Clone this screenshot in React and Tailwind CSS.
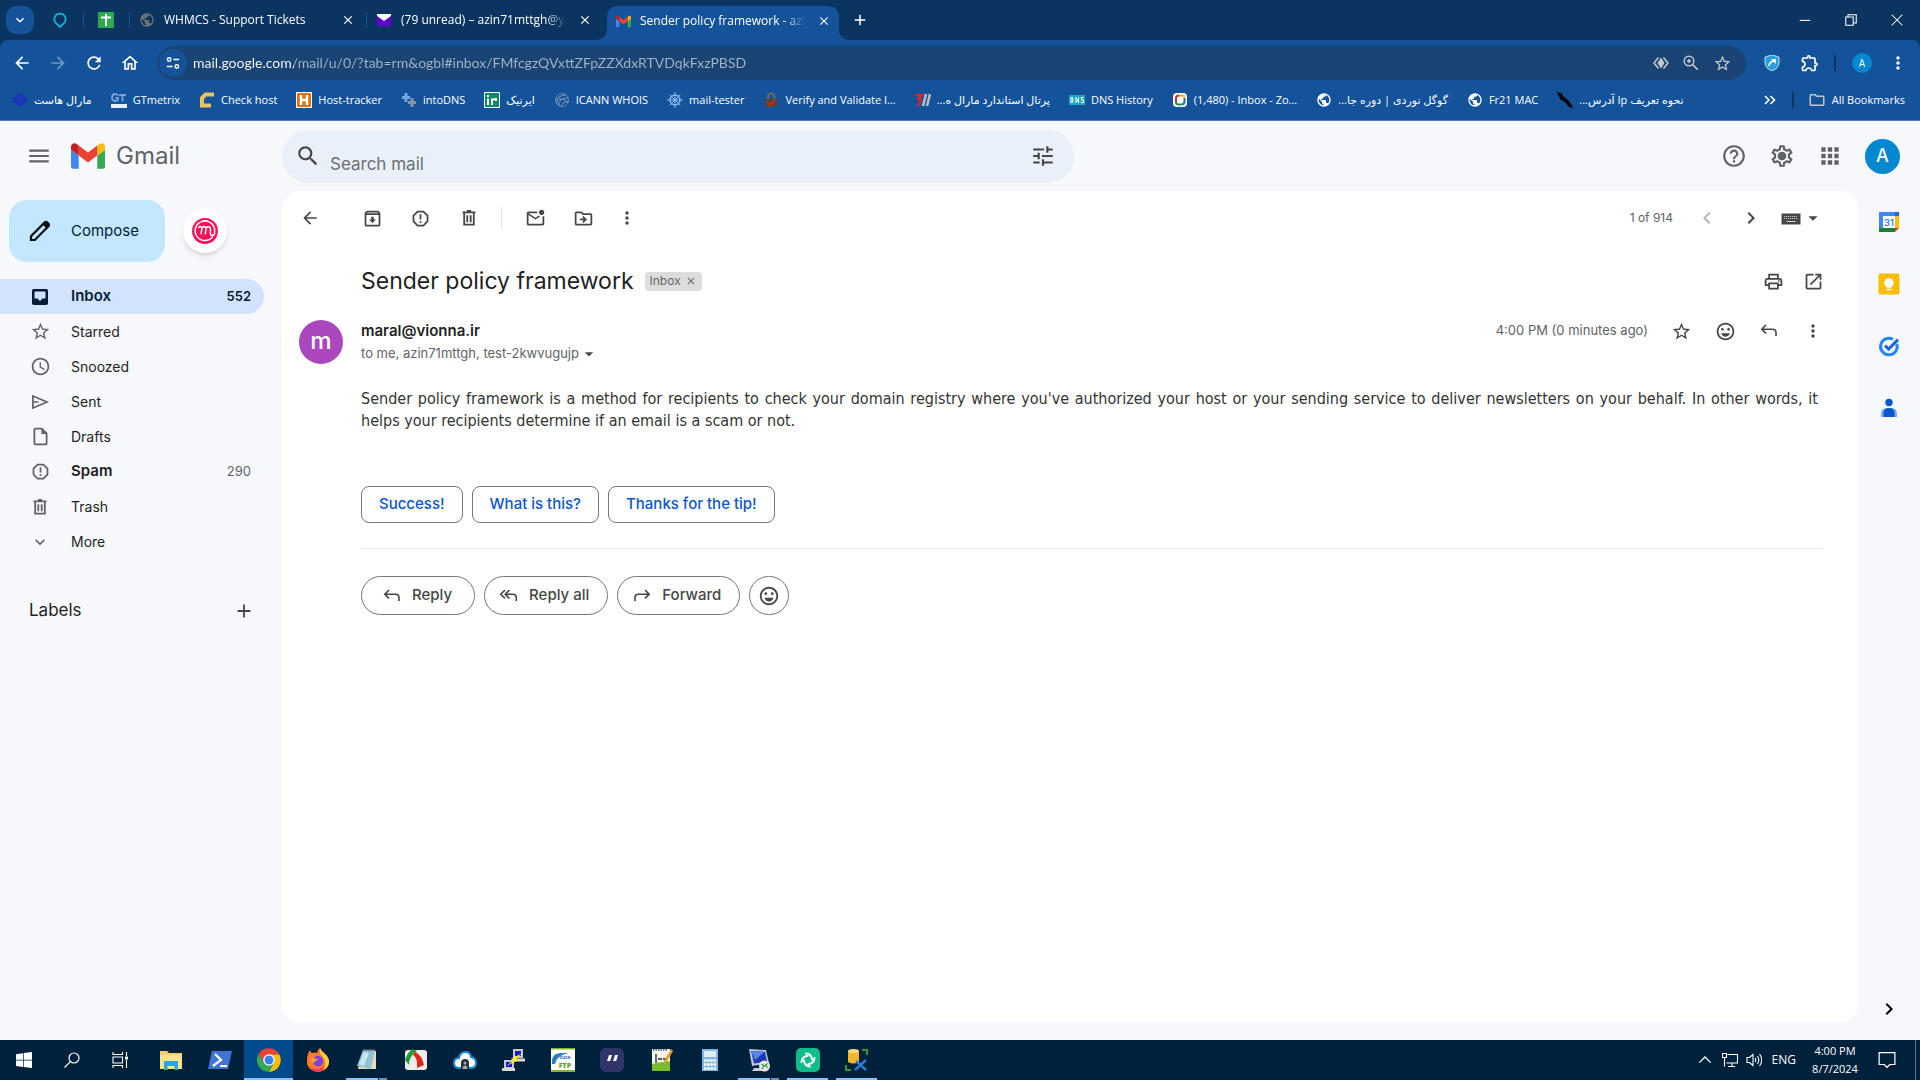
import {
    MdAccessTime, MdApps, MdArrowBack, MdArrowDropDown, MdArrowForward, MdAdd, MdChevronLeft, MdChevronRight,
    MdClose, MdExpandMore, MdHelpOutline, MdMenu, MdMoreVert, MdOpenInNew, MdOutlineArchive,
    MdOutlineDriveFileMove, MdOutlineEmojiEmotions, MdOutlineExtension, MdOutlineFolder, MdOutlineHome,
    MdOutlineInsertDriveFile, MdOutlineMarkEmailUnread, MdOutlinePrint, MdOutlineSettings, MdPublic, MdRefresh,
    MdReportGmailerrorred, MdSearch, MdStarOutline, MdTune,
} from 'react-icons/md';

/* ---------- icons ---------- */

function Svg({ size = 16, box = '0 0 16 16', children }) {
    return (
        <svg width={size} height={size} viewBox={box} fill="none" className="shrink-0" aria-hidden="true">
            {children}
        </svg>
    );
}

function GmailLogo({ size }) {
    return (
        <Svg size={size} box="52 42 88 66">
            <path fill="#4285f4" d="M58 108h14V74L52 59v43c0 3.32 2.69 6 6 6" />
            <path fill="#34a853" d="M120 108h14c3.32 0 6-2.69 6-6V59l-20 15" />
            <path fill="#fbbc04" d="M120 48v26l20-15v-8c0-7.42-8.47-11.65-14.4-7.2" />
            <path fill="#ea4335" d="M72 74V48l24 18 24-18v26L96 92" />
            <path fill="#c5221f" d="M52 51v8l20 15V48l-5.6-4.2c-5.94-4.45-14.4-.22-14.4 7.2" />
        </Svg>
    );
}

function InboxIcon() {
    return (
        <Svg size={20} box="0 0 20 20">
            <rect x="2" y="2" width="16" height="16" rx="1.8" fill="#001d35" />
            <path d="M4.5 4.5h11v7h-3L10 14l-2.5-2.5h-3z" fill="#d3e3fd" />
        </Svg>
    );
}

function TrashIcon() {
    return (
        <Svg size={20} box="0 0 20 20">
            <path d="M3.5 4.3h13M8 2.8h4M5.2 5v11.6h9.6V5M8.3 7.3v7M11.7 7.3v7" stroke="currentColor" strokeWidth="1.8" />
        </Svg>
    );
}

function ReplyIcon() {
    return (
        <Svg size={20} box="0 0 20 20">
            <path d="M7 4 2.8 8.2 7 12.4M3 8.2h10.5q3.5 0 3.5 3.5V15" stroke="currentColor" strokeWidth="1.6" />
        </Svg>
    );
}

function ReplyAllIcon() {
    return (
        <Svg size={20} box="0 0 20 20">
            <path d="M6 4 1.8 8.2 6 12.4M10.4 4 6.2 8.2l4.2 4.2M6.4 8.2h7.4q3.5 0 3.5 3.5V15" stroke="currentColor" strokeWidth="1.6" />
        </Svg>
    );
}

function ForwardIcon() {
    return (
        <Svg size={20} box="0 0 20 20">
            <path d="m13 4 4.2 4.2-4.2 4.2M17 8.2H6.5Q3 8.2 3 11.7V15" stroke="currentColor" strokeWidth="1.6" />
        </Svg>
    );
}

function SendIcon() {
    return (
        <Svg size={20} box="0 0 20 20">
            <path d="M2.9 4v12L17 10 2.9 4ZM3 10h5.5" stroke="currentColor" strokeWidth="1.7" />
        </Svg>
    );
}

function PencilIcon() {
    return (
        <Svg size={22} box="0 0 22 22">
            <path d="M2 20v-3.8L15.7 2.4q1.4-1 2.9.4l.7.8q1.2 1.3.1 2.7L5.8 20H2Z" stroke="#0b0f14" strokeWidth="2.2" />
            <path d="m13.5 4.5 4 4 3-2.7-1.5-3.2L16 1.5Z" fill="#0b0f14" />
        </Svg>
    );
}

function GearIcon() {
    return (
        <Svg size={26} box="0 0 24 24">
            <MdOutlineSettings size={24} />
            <circle cx="12" cy="12" r="3.4" fill="currentColor" />
        </Svg>
    );
}

function KeyboardIcon() {
    return (
        <Svg size={20} box="0 0 20 20">
            <path d="M.5 5.5h19v11H.5z" fill="#444746" />
            <path d="M3 8.5h14M3 10.5h14" stroke="#d5d5d5" strokeWidth=".9" strokeDasharray="1.2 .8" />
            <path d="M5.5 13.5h9" stroke="#d5d5d5" strokeWidth="1" />
        </Svg>
    );
}

function MStamp() {
    return (
        <Svg size={26} box="0 0 26 26">
            <circle cx="13" cy="13" r="13" fill="#ff0f57" />
            <path d="M20.8 18.6A9.8 9.8 0 1 1 22.6 11v4.2q-.3 2.2-2.2 2.2-2 0-2-2.4V11q0-2.3-2-2.3T14 11l-.8 5.4M14 11q.2-2.4-1.7-2.4T9.8 11L9 16.4M9.8 11q0-2.4-1.6-2.4-1.2 0-1.7 1.2" stroke="#fff" strokeWidth="1.5" />
        </Svg>
    );
}

/* ---------- browser ---------- */

function BrowserTab({ icon, title, active }) {
    return (
        <div className={`relative flex items-center gap-[9px] pl-[9px] text-white ${active ? 'h-[34px] w-[232px] rounded-t-[10px] bg-[#14539a] pb-1 pr-[5px]' : 'h-7 w-[228px]'}`}>
            {active && (
                <>
                    <span className="absolute bottom-0 -left-2.5 size-2.5 bg-[#14539a]"><span className="block size-full rounded-br-[10px] bg-[#0b3560]" /></span>
                    <span className="absolute bottom-0 -right-2.5 size-2.5 bg-[#14539a]"><span className="block size-full rounded-bl-[10px] bg-[#0b3560]" /></span>
                </>
            )}
            {icon}
            <button className="flex-1 overflow-hidden whitespace-nowrap text-left [mask-image:linear-gradient(90deg,#000_88%,transparent)]">{title}</button>
            <button aria-label="Close tab" className="flex size-5 items-center justify-center"><MdClose size={14} /></button>
        </div>
    );
}

function TabStrip() {
    return (
        <div className="flex h-10 items-end bg-[#0b3560] text-xs text-white">
            <button aria-label="Search tabs" className="mb-1.5 ml-1.5 flex size-7 items-center justify-center rounded-[10px] bg-[#14539a]">
                <MdExpandMore size={16} />
            </button>
            <div className="flex h-10 flex-1 items-center">
                <button aria-label="Pinned tab" className="ml-[18px]">
                    <Svg><path d="M8 1.7a5.6 5.6 0 0 0-3.2 10.2L8 15l3.2-3.1A5.6 5.6 0 0 0 8 1.7Z" stroke="#12b5d6" strokeWidth="1.8" /></Svg>
                </button>
                <span className="ml-[15px] h-4 w-px bg-[#14539a]" />
                <button aria-label="Pinned sheet" className="ml-3.5">
                    <Svg><path d="M0 0h16v16H0z" fill="#2daa4f" /><path d="M8 2v12M3 5.5h10" stroke="#fff" strokeWidth="2" /></Svg>
                </button>
                <span className="ml-[15px] h-4 w-px bg-[#14539a]" />
                <BrowserTab title="WHMCS - Support Tickets" icon={<MdPublic size={16} className="shrink-0 text-[#6d7175]" />} />
                <span className="ml-2 h-4 w-px bg-[#14539a]" />
                <BrowserTab
                    title="(79 unread) – azin71mttgh@yahoo.com"
                    icon={<Svg><path d="M1 3h14v11H1z" fill="#6001d2" /><path d="M1 2h14v2L8 9 1 4z" fill="#fff" /></Svg>}
                />
                <div className="ml-3 self-end">
                    <BrowserTab active title="Sender policy framework - azin71mttgh@gmail.com" icon={<GmailLogo size={15} />} />
                </div>
                <button aria-label="New tab" className="ml-3"><MdAdd size={18} /></button>
                <div className="ml-auto flex">
                    <button aria-label="Minimize" className="flex w-[46px] justify-center"><Svg size={12}><path d="M1 8.5h14" stroke="#fff" strokeWidth="1.4" /></Svg></button>
                    <button aria-label="Restore" className="flex w-[46px] justify-center"><Svg size={12}><path d="M1 4h10v11H1zM4 4V1h11v11h-4" stroke="#fff" strokeWidth="1.4" /></Svg></button>
                    <button aria-label="Close" className="flex w-[46px] justify-center"><Svg size={12}><path d="m1 1 14 14M15 1 1 15" stroke="#fff" strokeWidth="1.4" /></Svg></button>
                </div>
            </div>
        </div>
    );
}

function AddressBar() {
    return (
        <div className="flex h-[46px] items-center rounded-t-lg bg-[#14539a] pl-3 text-white">
            <div className="flex items-center gap-4">
                <button aria-label="Back"><MdArrowBack size={20} /></button>
                <button aria-label="Forward" className="text-[#6c95c4]"><MdArrowForward size={20} /></button>
                <button aria-label="Reload"><MdRefresh size={20} /></button>
                <button aria-label="Home"><MdOutlineHome size={20} /></button>
            </div>
            <div className="ml-[17px] flex h-[34px] flex-1 items-center rounded-full bg-[#1a4473] pl-0.5 pr-3.5">
                <button aria-label="Site information" className="flex size-7 items-center justify-center rounded-full bg-[#14539a]">
                    <Svg size={14}>
                        <path d="M8.5 4H15M1 12h6.5" stroke="#fff" strokeWidth="1.8" />
                        <circle cx="3.6" cy="4" r="2" stroke="#fff" strokeWidth="1.6" />
                        <circle cx="12.4" cy="12" r="2" stroke="#fff" strokeWidth="1.6" />
                    </Svg>
                </button>
                <input
                    aria-label="Address"
                    spellCheck={false}
                    defaultValue="mail.google.com/mail/u/0/?tab=rm&ogbl#inbox/FMfcgzQVxttZFpZZXdxRTVDqkFxzPBSD"
                    className="ml-1.5 flex-1 bg-[linear-gradient(90deg,#fff_101px,#a3b4c7_101px)] bg-clip-text font-[Lato,sans-serif] text-sm text-transparent outline-none"
                />
                <div className="flex items-center gap-3.5 text-[#c3c7cc]">
                    <Svg>
                        <path d="M5.5 2.5 1 8l4.5 5.5M10.5 2.5 15 8l-4.5 5.5" stroke="currentColor" strokeWidth="1.5" />
                        <path d="m8 2.5 3.5 5.500L8 13.500 4.500 8z" fill="currentColor" />
                    </Svg>
                    <Svg>
                        <circle cx="6" cy="6" r="4.8" stroke="currentColor" strokeWidth="1.5" />
                        <path d="m9.6 9.6 5 5M6 4v4M4 6h4" stroke="currentColor" strokeWidth="1.5" />
                    </Svg>
                    <button aria-label="Bookmark this tab"><MdStarOutline size={19} /></button>
                </div>
            </div>
            <div className="flex items-center pl-[18px] pr-3">
                <Svg>
                    <path d="M8 0 15 2v6q0 5-7 8-7-3-7-8V2z" fill="#2a9fd8" stroke="#b9dff2" />
                    <path d="M5 11q0-4 5-5V4" stroke="#fff" strokeWidth="1.6" />
                    <path d="M7 4h5v5z" fill="#fff" />
                </Svg>
                <button aria-label="Extensions" className="ml-5"><MdOutlineExtension size={20} /></button>
                <span className="ml-3.5 h-4 w-0.5 bg-[#0b3560]" />
                <button className="ml-4 flex size-5 items-center justify-center rounded-full bg-[#0288d1] text-[10px]">A</button>
                <button aria-label="Menu" className="ml-4"><MdMoreVert size={20} /></button>
            </div>
        </div>
    );
}

const globe = <MdPublic size={16} className="shrink-0 text-white" />;

const bookmarks = [
    { name: 'مارال هاست', icon: <Svg><path d="M2.5 5v6M5.5 2v11M8.5 1v5M8.5 8v7M11.5 3v10M14 6v4" stroke="#1b2fc4" strokeWidth="2.2" /></Svg> },
    { name: 'GTmetrix', icon: <Svg><path d="M0 12h16v4H0z" fill="#e8eef5" /><path d="M7 3.5Q5.8 2 4 2 1 2 1 5.5T4 9t3-1.5V6H4.5M8 3h7M11.5 3v6.5" stroke="#7ba4d6" strokeWidth="1.8" /></Svg> },
    { name: 'Check host', icon: <Svg><path d="M15 2.5H6.5L3 6v7.5h9" stroke="#e6c260" strokeWidth="4" /></Svg> },
    { name: 'Host-tracker', icon: <Svg><path d="M0 0h16v16H0z" fill="#fff" /><path d="M1 1h14v14H1z" fill="#e0730d" /><path d="M5 3v10M11 3v10M5 8h6" stroke="#fff" strokeWidth="2.4" /></Svg> },
    { name: 'intoDNS', icon: <Svg><path d="M5 1v9M1 5.5h8" stroke="#6fa8dc" strokeWidth="3" /><path d="M11 6v9M7 10.5h8" stroke="#8a939e" strokeWidth="3" /></Svg> },
    { name: 'ایرنیک', icon: <Svg><path d="M.5.5h15v15H.5z" fill="#0c8a6b" stroke="#fff" /><path d="M4 6.5V13M4 3v2M8 13V6.5M8 9q1-2.5 4-2v2" stroke="#fff" strokeWidth="2" /></Svg> },
    { name: 'ICANN WHOIS', icon: <Svg><circle cx="8" cy="8" r="6.5" stroke="#5f8cb8" /><path d="M3 12Q2 3 12 3M5 14Q4 6 14 6M8 15q-1-6 7-5M2 8q4-3 12 2" stroke="#7b9cbd" /></Svg> },
    { name: 'mail-tester', icon: <Svg><circle cx="8" cy="8" r="5" stroke="#84b9ea" strokeWidth="1.5" /><circle cx="8" cy="8" r="1.6" fill="#84b9ea" /><path d="M8 0v16M0 8h16M2.5 2.5l11 11M13.5 2.5l-11 11" stroke="#84b9ea" /></Svg> },
    { name: 'Verify and Validate I...', icon: <Svg><path d="M5 8V4.5q0-3 3-3t3.5 3V8" stroke="#6f6a60" strokeWidth="2" /><path d="M3 7h11l-1 8H3z" fill="#5b4228" /><path d="m4 10 3 3 5-5" stroke="#c8281e" strokeWidth="2" /></Svg> },
    { name: 'پرتال استاندارد مارال ه...', icon: <Svg><path d="M0 3h7L3 6l3 2-3 6" stroke="#e3252b" strokeWidth="2.2" /><path d="m8 14 3-12M12 14l3-12" stroke="#b7bcc4" strokeWidth="2.6" /></Svg> },
    { name: 'DNS History', icon: <Svg><path d="M0 3h16v10H0z" fill="#1ba7c4" /><path d="M2 5.5v5h1.5q1-2.5 0-5zM7 11V5.5l2.500 5V5M14.500 5.500h-2V8h2v2.500H12" stroke="#fff" /></Svg> },
    { name: '(1,480) - Inbox - Zo...', icon: <Svg><rect x="1" y="1" width="14" height="14" rx="4" fill="#fff" /><path d="M4 11V6q0-2.5 3-2.5" stroke="#e42527" strokeWidth="2" /><path d="M7 3.5h3q2.5 0 2.5 2" stroke="#f9b21d" strokeWidth="2" /><path d="M12.5 6v3q0 3.5-3 3.5" stroke="#226db4" strokeWidth="2" /><path d="M9.5 12.5H7q-3 0-3-2" stroke="#089949" strokeWidth="2" /></Svg> },
    { name: 'گوگل نوردی | دوره جا...', icon: globe },
    { name: 'Fr21 MAC', icon: globe },
    { name: 'نحوه تعریف Ip آدرس...', icon: <Svg><path d="M1 1 4 2l2 3 5 4 4 6-3-1-3-4-5-3z" fill="#05070a" stroke="#05070a" strokeWidth="1.5" /></Svg> },
];

function BookmarksBar() {
    return (
        <nav className="flex h-[35px] items-start border-b border-[#4a7dbb] bg-[#14539a] pl-3 pr-[15px] pt-1 text-[11px] text-white">
            <div className="flex flex-1 items-center gap-[19px]">
                {bookmarks.map(b => (
                    <a key={b.name} href="#bookmark" className="flex h-5 items-center gap-1.5 whitespace-nowrap">
                        {b.icon}
                        <bdi>{b.name}</bdi>
                    </a>
                ))}
            </div>
            <div className="flex h-5 items-center">
                <button aria-label="More bookmarks"><Svg><path d="m3 4 4 4-4 4M8.5 4l4 4-4 4" stroke="#fff" strokeWidth="1.6" /></Svg></button>
                <span className="ml-3.5 mr-3.5 h-4 w-0.5 bg-[#0b3560]" />
                <a href="#all" className="flex items-center gap-1.5 whitespace-nowrap"><MdOutlineFolder size={18} className="text-[#c3c7cc]" />All Bookmarks</a>
            </div>
        </nav>
    );
}

/* ---------- mail ---------- */

function IconButton({ label, children, className = '' }) {
    return (
        <button aria-label={label} className={`flex size-6 shrink-0 items-center justify-center text-[#444746] ${className}`}>
            {children}
        </button>
    );
}

function MailHeader() {
    return (
        <header className="flex h-[70px] items-center pl-[27px] pr-5">
            <div className="flex w-[255px] shrink-0 items-center">
                <IconButton label="Main menu"><MdMenu size={26} className="shrink-0 text-[#5f6368]" /></IconButton>
                <a href="#inbox" className="ml-5 flex items-center gap-[11px] text-2xl text-[#5f6368]"><GmailLogo size={34} />Gmail</a>
            </div>
            <form className="flex h-[53px] w-[792px] items-center rounded-full bg-[#e9f0fa] pl-3.5 pr-[19px]" onSubmit={e => e.preventDefault()}>
                <IconButton label="Search"><MdSearch size={26} className="shrink-0" /></IconButton>
                <input aria-label="Search mail" placeholder="Search mail" className="ml-2.5 h-full flex-1 pt-4 text-[17px] outline-none placeholder:text-[#6b6f73]" />
                <IconButton label="Search options"><MdTune size={26} className="shrink-0" /></IconButton>
            </form>
            <div className="ml-auto flex items-center gap-[22px] text-[#5f6368]">
                <button aria-label="Support"><MdHelpOutline size={26} /></button>
                <button aria-label="Settings"><GearIcon /></button>
                <button aria-label="Google apps"><MdApps size={26} /></button>
                <button aria-label="Account" className="flex size-[35px] items-center justify-center rounded-full bg-[#0288d1] text-lg font-medium text-white">A</button>
            </div>
        </header>
    );
}

const folders = [
    { name: 'Inbox', icon: <InboxIcon />, count: 552, active: true },
    { name: 'Starred', icon: <MdStarOutline size={21} /> },
    { name: 'Snoozed', icon: <MdAccessTime size={21} /> },
    { name: 'Sent', icon: <SendIcon /> },
    { name: 'Drafts', icon: <MdOutlineInsertDriveFile size={21} /> },
    { name: 'Spam', icon: <MdReportGmailerrorred size={21} />, count: 290, bold: true },
    { name: 'Trash', icon: <TrashIcon /> },
    { name: 'More', icon: <MdExpandMore size={20} /> },
];

function Folder({ name, icon, count, active, bold }) {
    const heavy = active || bold;
    return (
        <a href="#folder" className={`flex h-[35px] items-center rounded-r-full pl-[29px] pr-[13px] ${active ? 'bg-[#d3e3fd] text-[#001d35]' : 'text-[#1f1f1f]'}`}>
            <span className={`flex w-[22px] justify-center ${active ? '' : 'text-[#5f6368]'}`}>{icon}</span>
            <span className={`ml-5 flex-1 ${heavy ? 'text-[15px] font-semibold' : 'text-sm'}`}>{name}</span>
            <span className={`text-[13px] ${active ? 'font-semibold' : 'text-[#5f6368]'}`}>{count}</span>
        </a>
    );
}

function Sidebar() {
    return (
        <aside className="w-[282px] shrink-0 pt-[9px]">
            <div className="flex items-center gap-[18px] pl-[9px]">
                <button className="flex h-[62px] w-[156px] items-center gap-5 rounded-[18px] bg-[#c2e7ff] pl-5 text-[15px] text-[#001d35]">
                    <PencilIcon />
                    Compose
                </button>
                <button aria-label="Add-on" className="flex size-11 items-center justify-center rounded-full bg-white shadow-md"><MStamp /></button>
            </div>
            <nav className="mr-[18px] mt-[17px]">
                {folders.map(f => <Folder key={f.name} {...f} />)}
            </nav>
            <div className="mt-[39px] flex items-center justify-between pl-[29px] pr-[26px]">
                <h2 className="text-[17px] text-[#1f1f1f]">Labels</h2>
                <IconButton label="Create new label"><MdAdd size={22} /></IconButton>
            </div>
        </aside>
    );
}

function Toolbar() {
    return (
        <div className="flex h-[54px] items-center pl-4 pr-[33px]">
            <IconButton label="Back to Inbox"><MdArrowBack size={20} /></IconButton>
            <IconButton label="Archive" className="ml-[38px]"><MdOutlineArchive size={21} /></IconButton>
            <IconButton label="Report spam" className="ml-6"><MdReportGmailerrorred size={21} /></IconButton>
            <IconButton label="Delete" className="ml-[25px]"><TrashIcon /></IconButton>
            <span className="ml-5 h-[22px] w-px bg-[#e3e5e8]" />
            <IconButton label="Mark as unread" className="ml-[21px]"><MdOutlineMarkEmailUnread size={21} /></IconButton>
            <IconButton label="Move to" className="ml-6"><MdOutlineDriveFileMove size={21} /></IconButton>
            <IconButton label="More" className="ml-5"><MdMoreVert size={20} /></IconButton>
            <span className="ml-auto text-xs text-[#5f6368]">1 of 914</span>
            <IconButton label="Newer" className="ml-[22px] opacity-40"><MdChevronLeft size={24} /></IconButton>
            <IconButton label="Older" className="ml-5"><MdChevronRight size={24} /></IconButton>
            <IconButton label="Input tools" className="ml-4"><KeyboardIcon /></IconButton>
            <IconButton label="Choose input tool" className="-ml-0.5"><MdArrowDropDown size={22} /></IconButton>
        </div>
    );
}

function Message() {
    return (
        <article className="pl-[17px] pr-9 pt-[18px]">
            <div className="flex h-9 items-center pl-[62px]">
                <h1 className="text-[23px] text-[#1f1f1f]">Sender policy framework</h1>
                <span className="ml-[11px] flex h-[19px] items-center gap-1 rounded bg-[#dddddd] px-[5px] text-xs text-[#666666]">
                    Inbox
                    <button aria-label="Remove label"><MdClose size={12} /></button>
                </span>
                <IconButton label="Print" className="ml-auto"><MdOutlinePrint size={21} /></IconButton>
                <IconButton label="Open in new window" className="ml-4 -mr-[3px]"><MdOpenInNew size={21} /></IconButton>
            </div>

            <div className="mt-[19px] flex gap-[18px]">
                <div className="mt-0.5 flex size-11 shrink-0 items-center justify-center rounded-full bg-[#ab47bc] pb-0.5 text-2xl font-medium text-white">m</div>
                <div className="flex-1">
                    <div className="flex h-[26px] items-center">
                        <span className="text-[15px] font-semibold text-[#1f1f1f]">maral@vionna.ir</span>
                        <span className="ml-auto text-[13px] text-[#5f6368]">4:00 PM (0 minutes ago)</span>
                        <IconButton label="Star" className="ml-[21px]"><MdStarOutline size={21} /></IconButton>
                        <IconButton label="Add reaction" className="ml-5"><MdOutlineEmojiEmotions size={21} /></IconButton>
                        <IconButton label="Reply" className="ml-5"><ReplyIcon /></IconButton>
                        <IconButton label="More" className="ml-5 -mr-[3px]"><MdMoreVert size={20} /></IconButton>
                    </div>
                    <p className="flex h-5 items-center text-[13px] text-[#5f6368]">
                        to me, azin71mttgh, test-2kwvugujp
                        <MdArrowDropDown size={20} className="text-[#444746]" />
                    </p>
                </div>
            </div>

            <div className="pl-[62px]">
                <p className="mr-1 mt-6 text-justify font-['DejaVu_Sans_Condensed','DejaVu_Sans',sans-serif] text-base leading-[22px] text-[#333333]">
                    Sender policy framework is a method for recipients to check your domain registry where you've authorized your host or your sending service to deliver newsletters on your behalf. In other words, it helps your recipients determine if an email is a scam or not.
                </p>

                <div className="mt-[54px] flex gap-[9px]">
                    {['Success!', 'What is this?', 'Thanks for the tip!'].map(t => (
                        <button key={t} className="h-[37px] rounded-lg border border-[#747775] px-[17px] text-[15px] font-medium text-[#0b57d0]">{t}</button>
                    ))}
                </div>

                <hr className="mt-[25px] border-[#e8eaed]" />

                <div className="mt-[27px] flex gap-[9px] text-[15px] font-medium text-[#444746]">
                    <button className="flex h-[39px] items-center gap-2.5 rounded-full border border-[#747775] pl-5 pr-[22px]"><ReplyIcon />Reply</button>
                    <button className="flex h-[39px] items-center gap-2.5 rounded-full border border-[#747775] pl-3.5 pr-[18px]"><ReplyAllIcon />Reply all</button>
                    <button className="flex h-[39px] items-center gap-2.5 rounded-full border border-[#747775] pl-3.5 pr-[18px]"><ForwardIcon />Forward</button>
                    <button aria-label="Add reaction" className="flex h-[39px] w-10 items-center justify-center rounded-full border border-[#747775]"><MdOutlineEmojiEmotions size={22} /></button>
                </div>
            </div>
        </article>
    );
}

function SidePanel() {
    return (
        <aside className="flex w-[62px] shrink-0 flex-col items-center pt-5">
            <div className="flex flex-col gap-10">
                <a href="#calendar" aria-label="Calendar">
                    <Svg size={22} box="0 0 22 22">
                        <path d="M1 1h16v4H5v12H1z" fill="#4285f4" />
                        <path d="M17 1h4v4h-4z" fill="#1967d2" />
                        <path d="M17 5h4v12h-4z" fill="#fbbc04" />
                        <path d="M1 17h16v4H1z" fill="#188038" />
                        <path d="M17 17h4l-4 4z" fill="#ea4335" />
                        <path d="M5 5h12v12H5z" fill="#fff" />
                        <text x="11" y="14.5" textAnchor="middle" fontSize="9.5" fontWeight="500" fill="#1a73e8">31</text>
                    </Svg>
                </a>
                <a href="#keep" aria-label="Keep">
                    <Svg size={22} box="0 0 22 22">
                        <rect x=".5" y=".5" width="21" height="21" rx="1.5" fill="#fbbc04" />
                        <circle cx="11" cy="10" r="4.7" fill="#fff" />
                        <path d="M8.5 12h5v2.5h-5zM8.5 15.7h5v1.5h-5z" fill="#fff" />
                    </Svg>
                </a>
                <a href="#tasks" aria-label="Tasks">
                    <Svg size={22} box="0 0 22 22">
                        <path d="M15 4.3A8.3 8.3 0 1 0 18.8 9" stroke="#2684fc" strokeWidth="3" />
                        <path d="m7 10.5 3.6 3.6L20 4.6" stroke="#1a66e0" strokeWidth="3" />
                    </Svg>
                </a>
                <a href="#contacts" aria-label="Contacts">
                    <Svg size={22} box="0 0 22 22">
                        <circle cx="11" cy="5.5" r="3.7" fill="#0b57d0" />
                        <path d="M3 20v-3q0-6 6-6h4q6 0 6 6v3z" fill="#7baaf7" />
                        <path d="M5.5 20v-4.5Q6 11 11 11t5.5 4v5z" fill="#0b57d0" />
                    </Svg>
                </a>
            </div>
            <IconButton label="Hide side panel" className="mb-[19px] mt-auto"><MdChevronRight size={24} className="text-black" /></IconButton>
        </aside>
    );
}

/* ---------- taskbar ---------- */

const taskApps = [
    { name: 'File Explorer', icon: <><path d="M1 3h7l2 2h13v16H1z" fill="#f5cd6b" /><path d="M1 7h22v14H1z" fill="#fde28f" /><path d="M5 13h14v9h-3.5v-4h-7v4H5z" fill="#2ea3e3" /></> },
    { name: 'PowerShell', icon: <><path d="M4 3h20l-4 18H0z" fill="#3f74d6" /><path d="m7 6 6 6-8 6M12 18h7" stroke="#fff" strokeWidth="2.2" /></> },
    { name: 'Chrome', active: true, icon: <><path d="M12 6.5h10.4a12 12 0 0 0-20.8-.5l5.600 8.800z" fill="#ea4335" /><path d="M12 6.5h10.4A12 12 0 0 1 12 24l4.8-9.2z" fill="#fbbc04" /><path d="M7.2 14.8 1.6 6A12 12 0 0 0 12 24l4.8-9.2z" fill="#34a853" /><circle cx="12" cy="12" r="5.8" fill="#fff" /><circle cx="12" cy="12" r="4.5" fill="#3b82f0" /></> },
    { name: 'Firefox', icon: <><path d="M2 6q1-3 2-4 0 2 2 3 3-1 5 0 0-3 3-5 1 3 4 5 5 4 5 9a11 10 0 0 1-22 0q0-5 1-8z" fill="#ff7a2a" /><path d="M14 0q1 3 4 5 5 4 5 9a11 10 0 0 1-6 8q5-8-1-14-3-3-2-8z" fill="#ffcf3a" /><path d="M4 19q8 5 15-1-2 6-8 6-5-1-7-5z" fill="#f5336b" /><circle cx="12" cy="13" r="5.2" fill="#7b3fe4" /><path d="M4 10q4-1 9 2-4 0-5 3-3-1-4-5z" fill="#ff9d2e" /></> },
    { name: 'Notepad', running: 2, icon: <><path d="m8 2 13 1v18H3z" fill="#e8ddb8" /><path d="M8 2h12l-4 19L2 18z" fill="#8fc3d0" /><path d="m9 4 5 1-5 13-5-2z" fill="#c8e6ec" /><path d="M8 2h12" stroke="#666" strokeWidth="2" strokeDasharray="1.5 1" /></> },
    { name: 'Remote tool', icon: <><rect x="1" y="2" width="22" height="20" rx="3" fill="#ececec" /><path d="M9 1 13 3Q5 8 5 17L1 12Q3 4 9 1z" fill="#249b37" /><path d="M11 4q7 3 9 13l-7 3Q14 10 9 7z" fill="#e0261b" /></> },
    { name: 'Cloud', icon: <><path d="M6 20q-5 0-5-5t5-5q1-6 6.5-6 5 0 5.5 5 5 1 5 6t-5 5z" fill="#fff" stroke="#1488cc" strokeWidth="2" /><path d="M8 21v-6q0-4 4-4t4 4v6" fill="#23303c" /><circle cx="12" cy="15" r="1.5" fill="#aaa" /><path d="M9.5 21q0-3.5 2.5-3.5t2.5 3.5z" fill="#aaa" /></> },
    { name: 'PuTTY', icon: <><path d="M11 1h10v9H11zM2 12h10v9H2z" fill="#c9c9c9" /><path d="M13 3h6v5h-6zM4 14h6v5H4z" fill="#1a1ad6" /><path d="M9 10.5h14v3H11zM0 20h13v3H0z" fill="#d9d9d9" /><path d="M21 5 10 10l3 1.5L4 18l13-6-3-2z" fill="#fff200" /></> },
    { name: 'CuteFTP', icon: <><path d="M0 0h24v24H0z" fill="#fff" /><path d="M0 0h24v1.5H0zM0 22h24v2H0z" fill="#7fb62d" /><path d="M1 16Q0 5 10 5h8Q6 7 4 16z" fill="#2c7fb8" /><text x="14" y="10.5" textAnchor="middle" fontSize="5" fontWeight="700" fill="#1c6aa8">cute</text><text x="14" y="19.5" textAnchor="middle" fontSize="7" fontWeight="900" fill="#5ba32b">FTP</text></> },
    { name: 'Quotes', icon: <><rect width="24" height="24" rx="6" fill="#303468" /><path d="M9 7h3l-1.8 6H7zM15 7h3l-1.8 6H13z" fill="#fff" /></> },
    { name: 'Notepad++', icon: <><path d="M3 1h18v22H3z" fill="#f3f6e8" /><path d="M3 16q9-2 18-3v10H3z" fill="#77bd2c" /><path d="M4 2h15" stroke="#777" strokeWidth="2" strokeDasharray="1.5 1" /><path d="M7 6v9M9 11h4M14 11h3" stroke="#222" strokeWidth="1.3" /><path d="m22 1 2 2-7 12-2 1V13z" fill="#e99b26" /></> },
    { name: 'Calculator', icon: <><path d="M4 1h16v22H4z" fill="#7db8e2" /><path d="M6 3h12v6H6z" fill="#dcecf8" /><path d="M6 12.5h12M6 16.5h12M6 20.5h12" stroke="#fff" strokeWidth="2.6" strokeDasharray="2.4 .8" /></> },
    { name: 'Remote Desktop', running: 2, icon: <><path d="m2 1 17 1 3 13-17 3z" fill="#b9c7dc" /><path d="m4 3 14 .5 2 10-13 2z" fill="#1d37b5" /><path d="m4 3 14 .5L8 12z" fill="#5a86e8" /><path d="M7 20h8l1 3H5z" fill="#c5ccd6" /><circle cx="17.5" cy="18" r="5.5" fill="#e5e8e1" /><path d="m14.5 16 2.5 2-2 3M20.5 15.5 18 17.5l3 2" stroke="#3a9a3c" strokeWidth="1.3" /></> },
    { name: 'Element', running: 1, icon: <><rect width="24" height="24" rx="5" fill="#0dbd8b" /><path d="M10 5.5a6 6 0 0 1 6 6M18.5 10a6 6 0 0 1-6 6M14 18.5a6 6 0 0 1-6-6M5.5 14a6 6 0 0 1 6-6" stroke="#fff" strokeWidth="2" strokeLinecap="round" /></> },
    { name: 'Database tools', running: 1, icon: <><path d="M3 3q5.5-3 11 0v11q-5.5 3-11 0z" fill="#f7b52c" /><ellipse cx="8.5" cy="3" rx="5.5" ry="2" fill="#ffd977" /><path d="M17 2h5v5M1 17v5h5" stroke="#35953b" strokeWidth="2" /><path d="m11 13 10 9M21 12 10 22" stroke="#2b7cd3" strokeWidth="2.4" /></> },
];

function TaskApp({ name, icon, active, running }) {
    return (
        <button aria-label={name} className={`relative flex h-10 w-[49px] items-center justify-center ${active ? 'bg-[#004b8b]' : ''}`}>
            <Svg size={24} box="0 0 24 24">{icon}</Svg>
            {active && <span className="absolute inset-x-0 bottom-0 h-0.5 bg-[#8fc0f5]" />}
            {running && (
                <span className="absolute inset-x-1 bottom-0 flex h-0.5 gap-px">
                    <span className="flex-1 bg-[#8fc0f5]" />
                    {running > 1 && <span className="w-2 bg-[#6b8fb5]" />}
                </span>
            )}
        </button>
    );
}

function Taskbar() {
    return (
        <footer className="flex h-10 shrink-0 items-center bg-[#00213c] text-xs text-white">
            <button aria-label="Start" className="flex w-12 justify-center">
                <Svg><path d="m0 2.2 7-1v6.5H0zM7.7 1.1 16 0v7.7H7.7zM0 8.4h7v6.5l-7-1zM7.7 8.4H16V16l-8.3-1.1z" fill="#fff" /></Svg>
            </button>
            <button aria-label="Search" className="flex w-12 justify-center">
                <Svg><circle cx="10" cy="6" r="5" stroke="#fff" strokeWidth="1.2" /><path d="M6.3 9.7.5 15.5" stroke="#fff" strokeWidth="1.2" /></Svg>
            </button>
            <button aria-label="Task view" className="mr-0.5 flex w-12 justify-center">
                <Svg><path d="M1 0v2.5h9.5V0M1 5h9.5v6H1zM1 16v-2.5h9.5V16M14.5 0v4M14.5 8v8" stroke="#fff" strokeWidth="1.1" /><path d="M13 4.5h3v3h-3z" fill="#fff" /></Svg>
            </button>
            {taskApps.map(a => <TaskApp key={a.name} {...a} />)}
            <div className="ml-auto flex items-center">
                <button aria-label="Show hidden icons"><Svg size={14}><path d="m1.5 11 6.5-6.5 6.5 6.5" stroke="#fff" strokeWidth="1.5" /></Svg></button>
                <span className="ml-2.5"><Svg><path d="M5.5 2.5h10V11h-11M10 11v3.5M6 14.5h7M.5 1.5h4v4h-4zM2.5 5.5v9" stroke="#fff" strokeWidth="1.1" /></Svg></span>
                <span className="ml-2"><Svg><path d="M1 5.5h2.5l3.500-3v11l-3.500-3H1zM9 6q1.5 2 0 4M11.3 4q3 4 0 8M13.5 2q4.5 6 0 12" stroke="#fff" strokeWidth="1.1" /></Svg></span>
                <button className="ml-2.5">ENG</button>
                <time className="ml-3 w-[54px] text-center text-[11px] leading-[18px]">4:00 PM<br />8/7/2024</time>
                <button aria-label="Notifications" className="ml-4"><Svg size={18}><path d="M1 1.5h14V12h-4.5L8 14.5 5.5 12H1z" stroke="#fff" strokeWidth="1.1" /></Svg></button>
                <span className="ml-[19px] mr-1 h-10 w-px bg-[#5d7184]" />
            </div>
        </footer>
    );
}

export default function App() {
    return (
        <div className="flex min-h-screen flex-col bg-[#f6f8fc] font-[Inter,sans-serif]">
            <div className="bg-[#0b3560] font-['Open_Sans','DejaVu_Sans',sans-serif]">
                <TabStrip />
                <AddressBar />
                <BookmarksBar />
            </div>
            <MailHeader />
            <div className="flex flex-1">
                <Sidebar />
                <main className="mb-[18px] min-w-0 flex-1 rounded-[18px] bg-white">
                    <Toolbar />
                    <Message />
                </main>
                <SidePanel />
            </div>
            <div className="font-['Open_Sans',sans-serif]">
                <Taskbar />
            </div>
        </div>
    );
}
